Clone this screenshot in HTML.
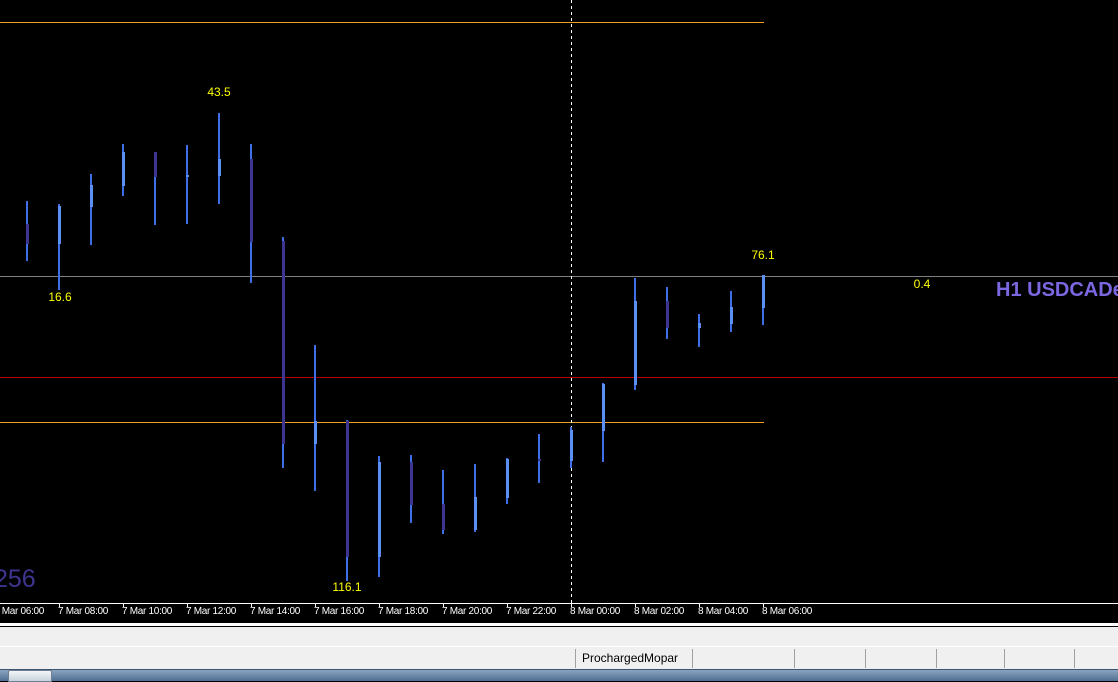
<!DOCTYPE html>
<html><head><meta charset="utf-8"><style>
html,body{margin:0;padding:0;width:1118px;height:680px;overflow:hidden;background:#000;font-family:"Liberation Sans",sans-serif}
.a{position:absolute}
.lbl{position:absolute;color:#ff0;font-size:12px;transform:translateX(-50%);}
.ax{position:absolute;top:606px;color:#fff;font-size:10px;white-space:nowrap;letter-spacing:-0.3px}
</style></head><body>
<svg class="a" style="left:0;top:0" width="1118" height="604" shape-rendering="crispEdges">
<rect x="0" y="22" width="764" height="1" fill="#f0a020"/>
<rect x="0" y="422" width="764" height="1" fill="#f0a020"/>
<rect x="0" y="276" width="1118" height="1" fill="#808080"/>
<rect x="0" y="377" width="1118" height="1" fill="#b00000"/>
<line x1="571.5" y1="0" x2="571.5" y2="603" stroke="#fff" stroke-dasharray="3,3"/>
<g id="c"></g>
</svg>
<script>
var C=[[27,201,261,224,244,0],[59,204,290,206,244,1],[91,174,245,185,207,1],[123,144,196,152,186,1],[155,152,225,152,177,0],[187,145,224,175,177,1],[219,113,204,159,176,1],[251,144,283,159,242,0],[283,237,468,241,444,0],[315,345,491,421,444,1],[347,420,581,421,557,0],[379,456,577,462,557,1],[411,455,523,462,505,0],[443,470,534,504,530,0],[475,464,532,497,530,1],[507,458,504,459,498,1],[539,434,483,459,461,0],[571,427,468,430,461,1],[603,383,462,384,431,1],[635,278,390,301,385,1],[667,287,339,301,328,0],[699,314,347,323,328,1],[731,291,332,307,324,1],[763,275,325,275,308,1]];
var s='';C.forEach(function(c){s+='<rect x="'+(c[0]-1)+'" y="'+c[1]+'" width="2" height="'+(c[2]-c[1])+'" fill="#3f6fe6"/>';s+='<rect x="'+(c[0]-1)+'" y="'+c[3]+'" width="3" height="'+(c[4]-c[3])+'" fill="'+(c[5]?'#5b8ff2':'#3d3590')+'"/>';});
document.getElementById('c').innerHTML=s;
</script>
<div class="lbl" style="left:219px;top:85px">43.5</div>
<div class="lbl" style="left:60px;top:290px">16.6</div>
<div class="lbl" style="left:347px;top:580px">116.1</div>
<div class="lbl" style="left:763px;top:248px">76.1</div>
<div class="lbl" style="left:922px;top:277px">0.4</div>
<div class="a" style="left:996px;top:279px;color:#7b68e0;font-size:20px;font-weight:bold;white-space:nowrap">H1 USDCADe</div>
<div class="a" style="left:-6px;top:565px;color:#3d3590;font-size:25px">256</div>
<div class="a" style="left:0;top:603px;width:1118px;height:1px;background:#fff"></div>
<svg class="a" style="left:0;top:603px" width="1118" height="5" shape-rendering="crispEdges"><g fill="#fff">
<rect x="59" y="0" width="1" height="4"/><rect x="123" y="0" width="1" height="4"/><rect x="187" y="0" width="1" height="4"/><rect x="251" y="0" width="1" height="4"/><rect x="315" y="0" width="1" height="4"/><rect x="379" y="0" width="1" height="4"/><rect x="443" y="0" width="1" height="4"/><rect x="507" y="0" width="1" height="4"/><rect x="571" y="0" width="1" height="4"/><rect x="635" y="0" width="1" height="4"/><rect x="699" y="0" width="1" height="4"/><rect x="763" y="0" width="1" height="4"/></g></svg>
<div class="ax" style="left:-6px">7 Mar 06:00</div>
<div class="ax" style="left:58px">7 Mar 08:00</div>
<div class="ax" style="left:122px">7 Mar 10:00</div>
<div class="ax" style="left:186px">7 Mar 12:00</div>
<div class="ax" style="left:250px">7 Mar 14:00</div>
<div class="ax" style="left:314px">7 Mar 16:00</div>
<div class="ax" style="left:378px">7 Mar 18:00</div>
<div class="ax" style="left:442px">7 Mar 20:00</div>
<div class="ax" style="left:506px">7 Mar 22:00</div>
<div class="ax" style="left:570px">8 Mar 00:00</div>
<div class="ax" style="left:634px">8 Mar 02:00</div>
<div class="ax" style="left:698px">8 Mar 04:00</div>
<div class="ax" style="left:762px">8 Mar 06:00</div>
<div class="a" style="left:0;top:623px;width:1118px;height:3px;background:#fff"></div>
<div class="a" style="left:0;top:626px;width:1118px;height:1px;background:#000"></div>
<div class="a" style="left:0;top:627px;width:1118px;height:42px;background:#f0f0f0"></div>
<div class="a" style="left:0;top:646px;width:1118px;height:1px;background:#fff"></div>
<div class="a" style="left:575px;top:649px;width:1px;height:19px;background:#a0a0a0"></div>
<div class="a" style="left:692px;top:649px;width:1px;height:19px;background:#a0a0a0"></div>
<div class="a" style="left:794px;top:649px;width:1px;height:19px;background:#a0a0a0"></div>
<div class="a" style="left:865px;top:649px;width:1px;height:19px;background:#a0a0a0"></div>
<div class="a" style="left:936px;top:649px;width:1px;height:19px;background:#a0a0a0"></div>
<div class="a" style="left:1004px;top:649px;width:1px;height:19px;background:#a0a0a0"></div>
<div class="a" style="left:1074px;top:649px;width:1px;height:19px;background:#a0a0a0"></div>
<div class="a" style="left:582px;top:651px;font-size:12px;color:#000">ProchargedMopar</div>
<div class="a" style="left:0;top:669px;width:1118px;height:11px;background:linear-gradient(#8aa4c0,#4f6f92);border-top:1px solid #3d5470"></div>
<div class="a" style="left:8px;top:670px;width:42px;height:10px;background:linear-gradient(#f4f6f8,#c8d2dc);border:1px solid #6d7f92;border-radius:2px 2px 0 0"></div>
</body></html>
